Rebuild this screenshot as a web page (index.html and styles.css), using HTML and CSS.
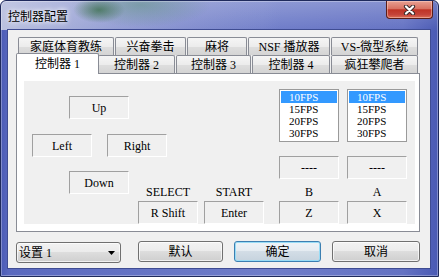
FILE: index.html
```html
<!DOCTYPE html>
<html lang="zh-CN">
<head>
<meta charset="utf-8">
<title>控制器配置</title>
<link rel="stylesheet" href="styles.css">
</head>
<body>
<div class="window">
  <div class="titlebar">
    <span class="title">控制器配置</span>
    <div class="close">
      <svg width="13" height="10" viewBox="0 0 13 10">
        <path d="M3 1.5 L10 8.5 M10 1.5 L3 8.5" stroke="#3a2a2a" stroke-width="4.2" stroke-linecap="round" fill="none"/>
        <path d="M3 1.5 L10 8.5 M10 1.5 L3 8.5" stroke="#ffffff" stroke-width="2.2" stroke-linecap="round" fill="none"/>
      </svg>
    </div>
  </div>
  <div class="client">
    <div class="tabs">
      <div class="tabrow back">
        <div class="tab">家庭体育教练</div>
        <div class="tab">兴奋拳击</div>
        <div class="tab">麻将</div>
        <div class="tab">NSF 播放器</div>
        <div class="tab">VS-微型系统</div>
      </div>
      <div class="tabrow front">
        <div class="tab sel">控制器 1</div>
        <div class="tab">控制器 2</div>
        <div class="tab">控制器 3</div>
        <div class="tab">控制器 4</div>
        <div class="tab">疯狂攀爬者</div>
      </div>
    </div>
    <div class="panel">
      <div class="page">
        <div class="leftblock">
          <div class="box up">Up</div>
          <div class="lr">
            <div class="box">Left</div>
            <div class="box">Right</div>
          </div>
          <div class="row3">
            <div class="box down">Down</div>
            <div class="mid">
              <div class="col">
                <div class="lbl">SELECT</div>
                <div class="box key">R Shift</div>
              </div>
              <div class="col">
                <div class="lbl">START</div>
                <div class="box key">Enter</div>
              </div>
            </div>
          </div>
        </div>
        <div class="keys">
          <div class="col">
            <div class="list">
              <div class="item on">10FPS</div>
              <div class="item">15FPS</div>
              <div class="item">20FPS</div>
              <div class="item">30FPS</div>
            </div>
            <div class="box dash">----</div>
            <div class="lbl">B</div>
            <div class="box key">Z</div>
          </div>
          <div class="col">
            <div class="list">
              <div class="item on">10FPS</div>
              <div class="item">15FPS</div>
              <div class="item">20FPS</div>
              <div class="item">30FPS</div>
            </div>
            <div class="box dash">----</div>
            <div class="lbl">A</div>
            <div class="box key">X</div>
          </div>
        </div>
      </div>
    </div>
    <div class="bottom">
      <div class="combo">
        <span>设置 1</span>
        <svg width="7" height="4" viewBox="0 0 7 4"><polygon points="0,0 7,0 3.5,4" fill="#000"/></svg>
      </div>
      <div class="btn b1">默认</div>
      <div class="btn b2 default">确定</div>
      <div class="btn b3">取消</div>
    </div>
  </div>
</div>
</body>
</html>
```

FILE: styles.css
```css
html, body {
  margin: 0;
  padding: 0;
  background: #ffffff;
}

body {
  font: 12px "Liberation Serif", "Noto Sans CJK SC", serif;
  color: #000;
}

.window {
  width: 439px;
  height: 277px;
  box-sizing: border-box;
  border: 1px solid #1f2a5c;
  border-radius: 6px 6px 0 0;
  overflow: hidden;
  display: flex;
  flex-direction: column;
  background:
    radial-gradient(ellipse 26px 13px at 98px 9px, rgba(50, 105, 65, 0.7), rgba(50, 105, 65, 0)),
    radial-gradient(ellipse 70px 22px at 140px 4px, rgba(80, 140, 110, 0.45), rgba(80, 140, 110, 0)),
    linear-gradient(90deg, rgba(205, 210, 230, 0.85) 0px, rgba(195, 200, 228, 0.5) 120px, rgba(190, 196, 228, 0) 280px) 0 0 / 100% 29px no-repeat,
    linear-gradient(180deg, rgba(255, 255, 255, 0.22) 0px, rgba(255, 255, 255, 0) 30px),
    linear-gradient(90deg, #4b5bb6 0px, #5a69bf 8px, #6f7dc9 60%, #6472c3 92%, #4a5ab4 100%);
  box-shadow: inset 0 0 0 1px rgba(255, 255, 255, 0.3);
}

.titlebar {
  height: 28px;
  flex: none;
  display: flex;
  justify-content: space-between;
  align-items: flex-start;
}

.title {
  margin: 8px 0 0 7px;
  line-height: 14px;
  font-family: "Noto Sans CJK SC", sans-serif;
  font-size: 12px;
  color: #000;
  text-shadow: 0 0 6px #fff, 0 0 4px rgba(255, 255, 255, 0.8);
}

.close {
  width: 47px;
  height: 18px;
  box-sizing: border-box;
  margin-right: 5px;
  border: 1px solid #5a1d18;
  border-top: none;
  border-radius: 0 0 4px 4px;
  background: linear-gradient(180deg, #e8a092 0%, #d97262 45%, #bf3325 52%, #c4443a 80%, #dc6f55 100%);
  box-shadow: inset 0 0 0 1px rgba(255, 220, 210, 0.45);
  display: flex;
  align-items: center;
  justify-content: center;
}

.client {
  flex: 1;
  margin: 0 7px 7px 6px;
  border: 1px solid #3f4c92;
  background: #f0f0f0;
  padding: 7px 10px 0 8px;
  display: flex;
  flex-direction: column;
}

.tabs {
  padding: 0 2px;
}

.tabrow {
  display: flex;
  height: 18px;
  align-items: flex-start;
}

.tab {
  height: 18px;
  box-sizing: border-box;
  flex: none;
  margin-right: 1px;
  border: 1px solid #898c95;
  border-bottom: none;
  border-radius: 2px 2px 0 0;
  background: linear-gradient(180deg, #f5f5f5 0%, #ececec 50%, #dedede 52%, #d4d4d4 100%);
  display: flex;
  align-items: center;
  justify-content: center;
  white-space: nowrap;
  line-height: 14px;
  padding-top: 1px;
}

.tab:last-child {
  margin-right: 0;
}

.back .tab:nth-child(1) { width: 96px; }
.back .tab:nth-child(2) { width: 71px; }
.back .tab:nth-child(3) { width: 60px; }
.back .tab:nth-child(4) { width: 82px; }
.back .tab:nth-child(5) { width: 87px; }

.front .tab:nth-child(1) { width: 79px; }
.front .tab:nth-child(2) { width: 77px; }
.front .tab:nth-child(3) { width: 75px; }
.front .tab:nth-child(4) { width: 78px; }
.front .tab:nth-child(5) { width: 87px; }

.front .tab.sel {
  width: 83px;
  height: 21px;
  margin: -2px -1px 0 -2px;
  background: #ffffff;
  position: relative;
  z-index: 1;
  padding-top: 0;
}

.panel {
  height: 159px;
  box-sizing: border-box;
  border: 1px solid #898c95;
  background: #ffffff;
  padding: 7px 4px 7px 7px;
  flex: none;
}

.page {
  height: 143px;
  background: #f0f0f0;
  overflow: hidden;
  display: flex;
  align-items: flex-start;
}

.box {
  width: 60px;
  height: 23px;
  box-sizing: border-box;
  border: 1px solid;
  border-color: #a0a0a0 #ffffff #ffffff #a0a0a0;
  display: flex;
  align-items: center;
  justify-content: center;
  white-space: nowrap;
  flex: none;
  line-height: 14px;
}

.leftblock {
  padding-left: 8px;
  display: flex;
  flex-direction: column;
}

.up {
  margin: 15px 0 0 37px;
}

.lr {
  display: flex;
  gap: 15px;
  margin-top: 15px;
}

.row3 {
  display: flex;
  align-items: flex-start;
  margin-top: 14px;
}

.down {
  margin-left: 37px;
}

.mid {
  display: flex;
  gap: 6px;
  margin: 14px 0 0 9px;
}

.col {
  display: flex;
  flex-direction: column;
  width: 60px;
}

.lbl {
  height: 14px;
  line-height: 14px;
  text-align: center;
  white-space: nowrap;
}

.key {
  margin-top: 2px;
}

.keys {
  display: flex;
  gap: 8px;
  margin: 8px 0 0 15px;
}

.list {
  width: 60px;
  height: 53px;
  box-sizing: border-box;
  border: 1px solid #9a9a9a;
  background: #ffffff;
  padding: 1px;
}

.item {
  height: 12px;
  line-height: 12px;
  font-size: 11px;
  padding-left: 8px;
  white-space: nowrap;
  overflow: hidden;
}

.item.on {
  background: #3399ff;
  color: #ffffff;
}

.dash {
  margin-top: 14px;
}

.keys .lbl {
  margin-top: 6px;
}

.bottom {
  display: flex;
  align-items: flex-start;
  margin-top: 9px;
}

.combo {
  width: 105px;
  height: 21px;
  margin-top: 1px;
  box-sizing: border-box;
  border: 1px solid #707070;
  border-radius: 3px;
  background: linear-gradient(180deg, #f2f2f2 0%, #ebebeb 49%, #dddddd 50%, #cfcfcf 100%);
  box-shadow: inset 0 0 0 1px rgba(255, 255, 255, 0.7);
  display: flex;
  align-items: center;
  justify-content: space-between;
  padding: 0 5px 0 2px;
  line-height: 14px;
  white-space: nowrap;
}

.btn {
  height: 21px;
  box-sizing: border-box;
  border: 1px solid #707070;
  border-radius: 3px;
  background: linear-gradient(180deg, #f2f2f2 0%, #ebebeb 49%, #dddddd 50%, #cfcfcf 100%);
  box-shadow: inset 0 0 0 1px rgba(255, 255, 255, 0.7);
  display: flex;
  align-items: center;
  justify-content: center;
  line-height: 14px;
  white-space: nowrap;
}

.b1 { width: 85px; margin-left: 17px; }
.b2 { width: 87px; margin-left: 11px; }
.b3 { width: 88px; margin-left: 11px; }

.btn.default {
  border-color: #3c7fb1;
  background: linear-gradient(180deg, #eef3f7 0%, #e4ebf1 49%, #d3dde6 50%, #c6d3de 100%);
  box-shadow: inset 0 0 0 1px #98dcf6;
}
```
